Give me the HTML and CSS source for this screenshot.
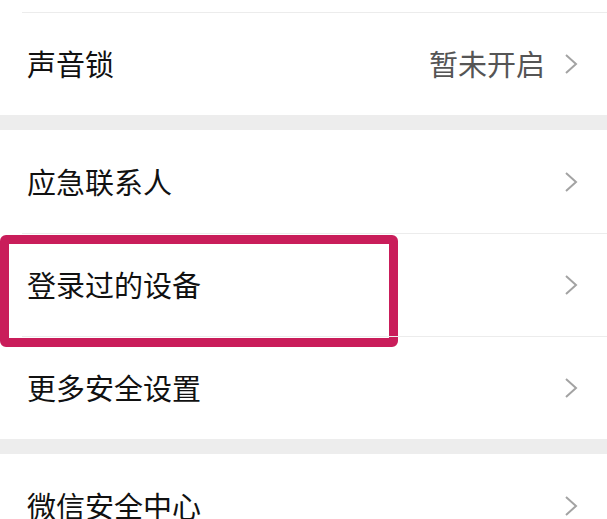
FILE: index.html
```html
<!DOCTYPE html>
<html lang="zh-CN">
<head>
  <meta charset="UTF-8" />
  <title>账号与安全</title>
  <link rel="stylesheet" href="styles.css">
</head>
<body>

  <div class="group">
    <div class="row row-cut"></div>
    <div class="row">
      <span class="row-title">声音锁</span>
      <span class="row-value">暂未开启</span>
      <svg class="arrow" viewBox="0 0 14 22"><polyline points="2,2 12,11 2,20" /></svg>
    </div>
  </div>

  <div class="group">
    <div class="row">
      <span class="row-title">应急联系人</span>
      <svg class="arrow" viewBox="0 0 14 22"><polyline points="2,2 12,11 2,20" /></svg>
    </div>
    <div class="row">
      <span class="row-title">登录过的设备</span>
      <svg class="arrow" viewBox="0 0 14 22"><polyline points="2,2 12,11 2,20" /></svg>
      <!-- 标注框 -->
      <div class="mark"></div>
    </div>
    <div class="row">
      <span class="row-title">更多安全设置</span>
      <svg class="arrow" viewBox="0 0 14 22"><polyline points="2,2 12,11 2,20" /></svg>
    </div>
  </div>

  <div class="group">
    <div class="row">
      <span class="row-title">微信安全中心</span>
      <svg class="arrow" viewBox="0 0 14 22"><polyline points="2,2 12,11 2,20" /></svg>
    </div>
  </div>

</body>
</html>
```

FILE: styles.css
```css
body {
  margin: 0;
  background: #ededed;
  font-family: "Noto Sans CJK SC", "Noto Sans", sans-serif;
  color: #111;
  overflow: hidden;
}

/* 每组白色卡片 */
.group {
  background: #fff;
  margin-bottom: 15px;
}

.row {
  position: relative;
  display: flex;
  align-items: center;
  height: 103px;
  padding: 0 29px 0 27px;
}

/* 行之间的分隔线（左侧缩进） */
.row + .row::before {
  content: "";
  position: absolute;
  top: 0;
  left: 22px;
  right: 0;
  height: 1px;
  background: #ececec;
}

.row-cut {
  height: 12px;
}

.row-title {
  flex: 1;
  font-size: 29px;
  line-height: 1;
}

.row-value {
  font-size: 29px;
  line-height: 1;
  color: #555;
  margin-right: 19px;
}

.arrow {
  width: 14px;
  height: 22px;
  fill: none;
  stroke: #a3a3a3;
  stroke-width: 2;
}

/* 红色标注框 */
.mark {
  position: absolute;
  left: 0;
  top: 2px;
  width: 380px;
  height: 94px;
  border: 9px solid #c91d5a;
  border-radius: 6px;
  box-sizing: content-box;
}
```
